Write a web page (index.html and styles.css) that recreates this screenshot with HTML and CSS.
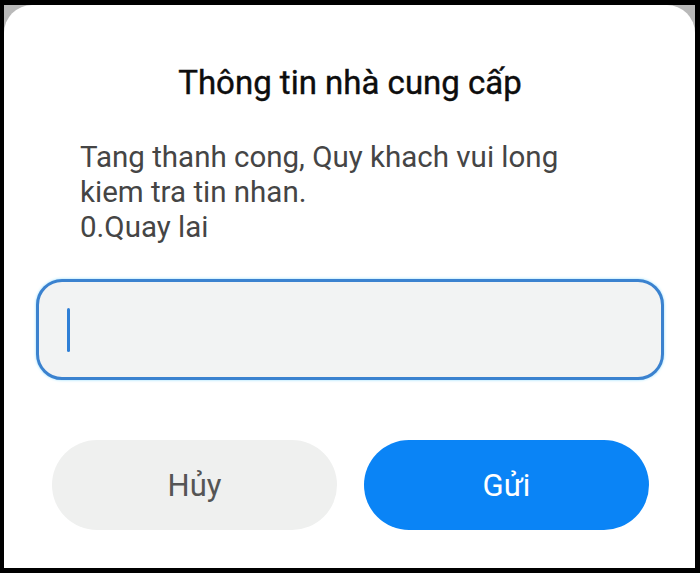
FILE: index.html
```html
<!DOCTYPE html>
<html lang="vi">
<head>
  <meta charset="UTF-8">
  <title>Thông tin nhà cung cấp</title>
  <link rel="stylesheet" href="styles.css">
</head>
<body>
  <div class="man-hinh">
    <div class="hop-thoai">
      <h1>Thông tin nhà cung cấp</h1>
      <p class="noi-dung">Tang thanh cong, Quy khach vui long<br>kiem tra tin nhan.<br>0.Quay lai</p>

      <div class="o-nhap">
        <span class="con-tro"></span>
      </div>

      <div class="nut-bam">
        <button class="huy">Hủy</button>
        <button class="gui">Gửi</button>
      </div>
    </div>
  </div>
</body>
</html>
```

FILE: styles.css
```css
body {
  margin: 0;
  background: #000;
  font-family: Roboto, "Noto Sans", sans-serif;
}
.man-hinh {
  margin: 5px 5px 5px 4px;
  height: 563px;
  background: #b9b9b9;
}
.hop-thoai {
  background: #fff;
  height: 100%;
  border-radius: 28px 28px 0 0;
  padding: 0 31px 0 32px;
  box-sizing: border-box;
  overflow: hidden;
}
h1 {
  margin: 0;
  padding-top: 58px;
  font-size: 33px;
  font-weight: 400;
  color: #0d0d0d;
  text-align: center;
  line-height: 40px;
  -webkit-text-stroke: 0.4px #0d0d0d;
}
.noi-dung {
  margin: 37px 0 0 44px;
  font-size: 29.5px;
  line-height: 35px;
  color: #454545;
}
.o-nhap {
  margin-top: 34px;
  height: 101px;
  box-sizing: border-box;
  border: 3px solid #3b82cf;
  border-radius: 26px;
  background: #f2f3f3;
  box-shadow: 0 0 3px #8fdcff;
  display: flex;
  align-items: center;
  padding-left: 28px;
}
.con-tro {
  width: 3px;
  height: 44px;
  border-radius: 2px;
  background: #2f7fd6;
}
.nut-bam {
  display: flex;
  gap: 27px;
  margin-top: 60px;
  padding: 0 15px 0 16px;
}
button {
  flex: 1;
  height: 90px;
  border: none;
  border-radius: 45px;
  font-family: inherit;
  font-size: 31px;
}
.huy {
  background: #eff0ef;
  color: #555;
}
.gui {
  background: #0a84f6;
  color: #fff;
}
```
